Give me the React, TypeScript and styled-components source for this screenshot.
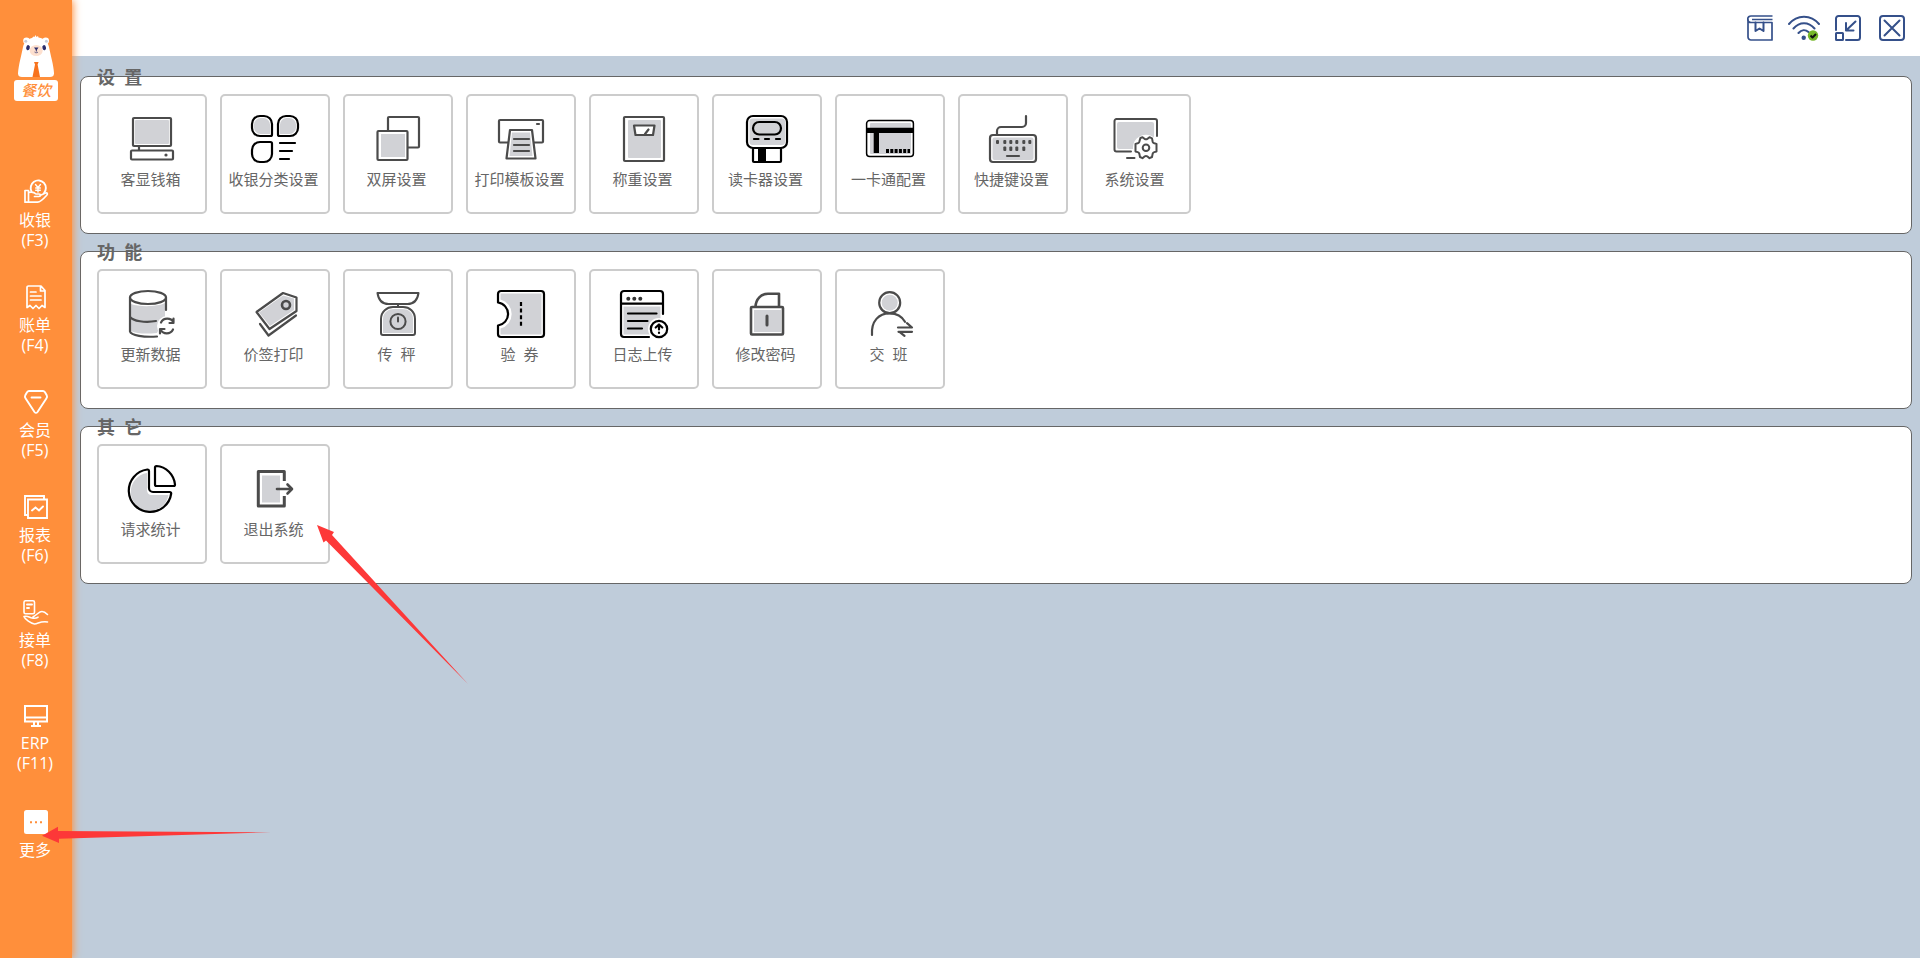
import React from "react";
import styled, { createGlobalStyle } from "styled-components";

const ORANGE = "#ff8f3b";
const GRAY = "#d1d2d6";
const DARK = "#4b4b4b";
const NAVY = "#35508a";

const GlobalStyle = createGlobalStyle`
  * { box-sizing: border-box; }
  body {
    margin: 0;
    background: #bfccda;
    font-family: "Open Sans", "Noto Sans CJK SC", sans-serif;
  }
  svg { display: block; }
`;

const Page = styled.div`
  position: relative;
  display: flex;
  min-height: 100vh;
  overflow: hidden;
`;

const Sidebar = styled.aside`
  flex: none;
  width: 72px;
  background: ${ORANGE};
  box-shadow: 1px 0 8px ${ORANGE};
  z-index: 1;
`;

const Brand = styled.div`
  display: flex;
  flex-direction: column;
  align-items: center;
  gap: 3px;
  padding-top: 35px;
  height: 180px;
`;

const BrandLabel = styled.strong`
  width: 44px;
  height: 21px;
  border-radius: 3px;
  background: #fff;
  color: ${ORANGE};
  font-size: 15px;
  line-height: 21px;
  font-style: italic;
  font-weight: 500;
  text-align: center;
`;

const Nav = styled.nav`
  display: grid;
  grid-auto-rows: 105px;
`;

const NavItem = styled.a`
  display: flex;
  flex-direction: column;
  align-items: center;
  gap: 6px;
  color: #fff;
  font-size: 16px;
  line-height: 20px;
  text-align: center;
  text-decoration: none;
`;

const NavLabel = styled.span`
  padding-right: 2px;
  white-space: pre-line;
`;

const Content = styled.div`
  flex: 1;
  min-width: 0;
`;

const TopBar = styled.header`
  display: flex;
  justify-content: flex-end;
  align-items: center;
  gap: 12px;
  height: 56px;
  padding-right: 12px;
  background: #fff;
`;

const ToolButton = styled.button`
  display: flex;
  justify-content: center;
  width: 32px;
  padding: 0;
  border: 0;
  background: none;
  cursor: pointer;
`;

const Groups = styled.main`
  display: flex;
  flex-direction: column;
  gap: 17px;
  padding: 20px 8px;
`;

const Group = styled.section`
  padding: 0 16px 19px;
  border: 1px solid #666;
  border-radius: 8px;
  background: #fff;
`;

const GroupTitle = styled.h2`
  margin: -12px 0 5px;
  color: #666;
  font-size: 18px;
  line-height: 24px;
  font-weight: 700;
  white-space: pre;
`;

const Tiles = styled.div`
  display: flex;
  flex-wrap: wrap;
  gap: 13px;
`;

const Tile = styled.button`
  display: flex;
  flex-direction: column;
  align-items: center;
  gap: 6px;
  width: 110px;
  height: 120px;
  padding: 19px 0 0;
  border: 2px solid #ccc;
  border-radius: 5px;
  background: #fff;
  color: #666;
  font-family: inherit;
  font-size: 15px;
  line-height: 20px;
  cursor: pointer;
`;

const TileLabel = styled.span`
  padding-right: 3px;
  white-space: pre;
`;

const Pointer = styled.svg`
  position: absolute;
  pointer-events: none;
  fill: #fd3838;
  z-index: 2;
`;

const ExitPointer = styled(Pointer)`
  left: 317px;
  top: 525px;
`;

const MorePointer = styled(Pointer)`
  left: 42px;
  top: 826px;
`;

const Ico = ({ color = DARK, w = 2.2, children }: { color?: string; w?: number; children: React.ReactNode }) => (
  <svg width="48" height="48" viewBox="0 0 48 48" fill="none" stroke={color} strokeWidth={w} strokeLinejoin="round" strokeLinecap="round" overflow="visible" aria-hidden="true">
    {children}
  </svg>
);

const Fill = (p: React.SVGProps<SVGRectElement>) => <rect fill={GRAY} stroke="none" {...p} />;

const icons = {
  drawer: (
    <Ico>
      <Fill x="7" y="5" width="34" height="24" rx="1" />
      <rect x="5" y="3" width="38" height="28" rx="1" />
      <path d="M11 32v3" />
      <rect x="3" y="35.5" width="42" height="9" rx="1" />
      <circle cx="38" cy="40" r="1.6" fill={DARK} stroke="none" />
    </Ico>
  ),
  category: (
    <Ico color="#000">
      <path d="M9.500 3a6.500 6.500 0 0 0-6.500 6.500v3A6.500 6.500 0 0 0 9.500 19H19V9.500A6.500 6.500 0 0 0 12.500 3zM38.500 3a6.500 6.500 0 0 1 6.500 6.500v3a6.500 6.500 0 0 1-6.500 6.500H29V9.500A6.500 6.500 0 0 1 35.500 3z" fill={GRAY} stroke="none" />
      <path d="M9 1h4a8 8 0 0 1 8 8v10.500a1.500 1.500 0 0 1-1.500 1.500H9a8 8 0 0 1-8-8V9a8 8 0 0 1 8-8z" />
      <path d="M39 1h-4a8 8 0 0 0-8 8v10.500a1.500 1.500 0 0 0 1.500 1.500H39a8 8 0 0 0 8-8V9a8 8 0 0 0-8-8z" />
      <path d="M9 47h4a8 8 0 0 0 8-8V28.500a1.500 1.500 0 0 0-1.500-1.500H9a8 8 0 0 0-8 8v4a8 8 0 0 0 8 8z" />
      <path d="M29 28h15M29 36h12M29 44h9" />
    </Ico>
  ),
  screens: (
    <Ico>
      <rect x="14" y="2" width="31" height="30.500" rx="1" />
      <rect x="3.500" y="16" width="30" height="29" rx="1" fill="#fff" />
      <Fill x="7" y="19" width="24" height="23" />
    </Ico>
  ),
  printer: (
    <Ico>
      <rect x="2" y="5" width="44" height="22.500" rx="1" />
      <path d="M40 9h2" />
      <path d="M13 15h22l3.500 28.500H9.500z" fill="#fff" />
      <path d="M15 17.500h18l2.500 23.500h-23z" fill={GRAY} stroke="none" />
      <path d="M17 24h15M17 30h15M17 36h15" />
    </Ico>
  ),
  weigh: (
    <Ico>
      <Fill x="8" y="5" width="33" height="38" rx="1" />
      <rect x="4" y="2" width="40" height="44" rx="1" />
      <path d="M14 10.500h20.500l-1.500 9.500H15.500z" fill="#fff" />
      <path d="M28.500 14.500l-3.500 4.500" />
    </Ico>
  ),
  reader: (
    <Ico color="#000">
      <Fill x="6.500" y="3.500" width="35.500" height="26.500" rx="3" />
      <rect x="4" y="1" width="40" height="32" rx="6" />
      <rect x="10" y="7" width="28" height="12.500" rx="6.200" />
      <path d="M9 24h4.500M20 24h4M31 24h4" transform="translate(2)" />
      <path d="M10 34v12a1 1 0 0 0 1 1h26a1 1 0 0 0 1-1V34" />
      <path d="M15 33h8v14h-8z" fill="#000" stroke="none" />
    </Ico>
  ),
  card: (
    <Ico color="#000" w={1.5}>
      <Fill x="4" y="8" width="41" height="31" rx="1" />
      <rect x="0.600" y="5.600" width="46.800" height="36" rx="3" />
      <path d="M0 12.700h48v5.300H13v20H7.700V18H0z" fill="#000" stroke="none" />
      <path d="M20 36h24" strokeWidth="4" strokeDasharray="3 1.300" strokeLinecap="butt" />
    </Ico>
  ),
  keyboard: (
    <Ico>
      <Fill x="3.500" y="22.500" width="41" height="22.500" rx="2" />
      <rect x="1" y="20" width="46" height="27" rx="3" />
      <path d="M8 19v-3a4 4 0 0 1 4-4h21a4 4 0 0 0 4-4V1" />
      <g fill={DARK} stroke="none">
        {[7, 14.300, 20.300, 26.300, 33.300, 39.300].map((x) => <rect key={x} x={x} y="25" width="3" height="4" rx="1" />)}
        {[14.300, 20.300, 26.300, 33.300].map((x) => <rect key={x} x={x} y="31.500" width="3" height="4.500" rx="1" />)}
      </g>
      <path d="M18 41h12" />
    </Ico>
  ),
  system: (
    <Ico w={2}>
      <Fill x="5" y="7" width="37" height="27" rx="2" />
      <path d="M45 21V6a2 2 0 0 0-2-2H4.500a2 2 0 0 0-2 2v28.500a2 2 0 0 0 2 2H19M15 43h7.500" />
      <g transform="translate(34 32.700)">
        <circle r="13" fill="#fff" stroke="none" />
        <path d="M-5.600-9.700L-3.500-10.500l2.300 1.900a3 3 0 0 0 2.400 0L3.500-10.500 6-9.300l.7 3.400a2.500 2.500 0 0 0 1.600 1.500l2.200.6v7.600l-2.200.6a2.500 2.500 0 0 0-1.600 1.500L6 9.300l-2.500 1.200-2.300-1.900a3 3 0 0 0-2.400 0l-2.300 1.900L-6 9.300l-.7-3.400a2.500 2.500 0 0 0-1.600-1.500l-2.200-.6v-7.600l2.200-.6a2.500 2.500 0 0 0 1.600-1.500z" fill="#fff" />
        <circle r="3.300" />
      </g>
    </Ico>
  ),
  data: (
    <Ico>
      <path d="M3 14c8 3 26 3 34-1v14l-8 16c-10 1-20 1-26-2z" fill={GRAY} stroke="none" />
      <ellipse cx="20" cy="7.500" rx="18" ry="6.500" fill="#fff" />
      <path d="M2 7.500v34c1 4 14 6 27 5M38 7.500V20M2 27c3 4 15 6 26 4" />
      <circle cx="39" cy="36" r="10" fill="#fff" stroke="none" />
      <path d="M33 32.500a7 7 0 0 1 12.500 0M45.500 28.500v4.500h-4M45 39.500a7 7 0 0 1-12.500 0M32 43.500V39h4.500" />
    </Ico>
  ),
  tag: (
    <Ico>
      <path d="M8 22.500L32 5.500l11 3v11.500L19 36z" fill={GRAY} stroke="none" />
      <path d="M5.500 22L32 3l13.500 4.500v13.500L18.500 39z" />
      <circle cx="35" cy="15" r="4" strokeWidth="2.600" />
      <path d="M9 34l8.500 11.500 27.500-20" />
    </Ico>
  ),
  scale: (
    <Ico w={2}>
      <path d="M9 43V29c0-7 6-10 11-10h8c6 0 11 3 11 10v14z" fill={GRAY} stroke="none" />
      <path d="M3.500 3h41c-1 7-5 11-11 11H14.500C8.500 14 4.500 10 3.500 3zM24 14v3M7 43V29c0-7.500 6-12 12-12h10c6.500 0 12 4.500 12 12v14a2 2 0 0 1-2 2H9a2 2 0 0 1-2-2z" />
      <circle cx="24" cy="31.500" r="7.600" />
      <path d="M24 27.500v4" />
    </Ico>
  ),
  ticket: (
    <Ico color="#000">
      <path d="M3.500 3.500h41v41h-41v-6a15 15 0 0 0 0-29z" fill={GRAY} stroke="none" />
      <path d="M1 12.500V4a3 3 0 0 1 3-3h40a3 3 0 0 1 3 3v40a3 3 0 0 1-3 3H4a3 3 0 0 1-3-3v-8.500a11.600 11.600 0 0 0 0-23z" />
      <path d="M24 12v25" strokeDasharray="4 2.600" strokeLinecap="butt" />
    </Ico>
  ),
  log: (
    <Ico color="#000">
      <Fill x="3.500" y="16.500" width="37" height="28" />
      <path d="M43 24V4a3 3 0 0 0-3-3H4a3 3 0 0 0-3 3v40a3 3 0 0 0 3 3h25M1 13.700h42" />
      <g fill="#333" stroke="none">
        <circle cx="8.300" cy="8.700" r="2" /><circle cx="14.300" cy="8.700" r="2" /><circle cx="20.300" cy="8.700" r="2" />
      </g>
      <path d="M8 23.500h28.500M8 31h19.500M8 38.500h14" />
      <circle cx="39" cy="39" r="11" fill="#fff" stroke="none" />
      <circle cx="39" cy="39" r="8.200" />
      <path d="M39 35v4.500M39 42.500v.5M35.700 37.500l3.300-3 3.300 3" />
    </Ico>
  ),
  lock: (
    <Ico w={2.600}>
      <rect x="8" y="17" width="32" height="27.500" rx="1" />
      <Fill x="11" y="20" width="27" height="22" />
      <path d="M12.500 16.500C13 9 18 3.800 25 3.800h11v12.700" />
      <path d="M24 26v9" strokeWidth="3" />
    </Ico>
  ),
  shift: (
    <Ico>
      <circle cx="23.700" cy="12.700" r="8" fill={GRAY} stroke="none" />
      <circle cx="23.700" cy="12.700" r="10.500" />
      <path d="M6 45C5 31 13 23.300 23.500 23.300c7 0 12.500 3 15.500 8.500" />
      <path d="M32 37.500h14l-5-4.300M46 41.800H32.500M33.500 41.800l5 4" />
    </Ico>
  ),
  pie: (
    <Ico color="#000">
      <path d="M19 8a19 19 0 1 0 21.500 22H24c-3 0-5-2-5-5z" fill={GRAY} stroke="none" />
      <path d="M21 6a1.500 1.500 0 0 0-1.700-1.500A21.300 21.300 0 1 0 43.200 28.500a1.500 1.500 0 0 0-1.500-1.500H25a4 4 0 0 1-4-4zM27 2.500A1.500 1.500 0 0 1 28.500 1C38 1.500 46 9.500 47 19.500a1.500 1.500 0 0 1-1.500 1.500H28.500a1.500 1.500 0 0 1-1.500-1.500z" />
    </Ico>
  ),
  exit: (
    <Ico w={3}>
      <Fill x="11" y="10.500" width="18" height="27" />
      <path d="M33.300 16v-9.500H7.300v34.500h26v-10" strokeLinecap="butt" />
      <path d="M26 24h14" strokeWidth="2.600" />
      <path d="M36.500 19.500l4.500 4.500-4.500 4.500" strokeWidth="2.600" />
    </Ico>
  ),
};

const Nic = ({ h = 24, children }: { h?: number; children: React.ReactNode }) => (
  <svg width="24" height={h} viewBox={`0 0 24 ${h}`} fill="none" stroke="#fff" strokeWidth="1.900" strokeLinejoin="round" strokeLinecap="round" overflow="visible" aria-hidden="true">
    {children}
  </svg>
);

const navItems = [
  { label: "收银\n(F3)", icon: (
    <Nic>
      <path d="M7.500 11.500A7.600 7.600 0 1 1 20 13" />
      <path d="M11.500 4.500l2.500 3 2.500-3M14 7.500V12M11.700 8h4.600M11.700 10.200h4.600" strokeWidth="1.400" />
      <path d="M1 10.500h3.500v11.700H1zM4.500 12.500c4-1 6 0 7.500 1.500h3c2 0 2 2.500 0 2.500h-4.500M16 15.500l5.500-2.500c2-.5 2.500 1 1 2.500-4 4.500-6 6.500-9 6.700h-9" strokeWidth="1.700" />
    </Nic>
  ) },
  { label: "账单\n(F4)", icon: (
    <Nic>
      <path d="M3 22.500V2.500A1.500 1.500 0 0 1 4.500 1H17l4 4.500v17l-3-2-3 3-3-3-3 3-3-3zM16.500 1.500V6H21M6.500 7H12M6.500 11h10.500M6.500 15h10.500" strokeWidth="1.700" />
    </Nic>
  ) },
  { label: "会员\n(F5)", icon: (
    <Nic>
      <path d="M5 1h14c1 0 1.500.5 2 1.200l1.700 3c.6 1.200.5 2-.2 3L13.500 22c-1 1.200-2 1.200-3 0L1.500 8.200c-.7-1-.8-1.800-.2-3L3 2.200C3.500 1.500 4 1 5 1zM7.500 7.500h9" />
    </Nic>
  ) },
  { label: "报表\n(F6)", icon: (
    <Nic>
      <path d="M4 20H1V1h19v3M4 4.500h19V23H4zM8 15.500l3.500-3 3.500 3 4-4" strokeLinejoin="miter" />
    </Nic>
  ) },
  { label: "接单\n(F8)", icon: (
    <Nic>
      <rect x="0" y="0.800" width="10.500" height="13" rx="1.500" strokeWidth="1.600" />
      <path d="M3 4.500h5M3 8h2" />
      <path d="M0 16.500c4-1 6 1.500 8 1.500 1.500 0 3 1 6-.8M9 17c5-3 6-5.500 9-5.500 2 0 4 1.500 5.500 3M0 16.500c1 3 7 7 10.500 7.500 4-.500 6-3 13-2" strokeWidth="1.600" />
    </Nic>
  ) },
  { label: "ERP\n(F11)", icon: (
    <Nic h={22}>
      <path d="M1 1h22v15.500H1zM1 12.500h22M10 17v4M14 17v4M7 21h10" strokeLinejoin="miter" strokeLinecap="butt" strokeWidth="2" />
    </Nic>
  ) },
  { label: "更多", icon: (
    <Nic>
      <rect width="24" height="24" rx="2.500" fill="#fff" stroke="none" />
      <path d="M6 11.200h2v2H6zM11 11.200h2v2h-2zM16 11.200h2v2h-2z" fill={ORANGE} stroke="none" />
    </Nic>
  ) },
];

const groups = [
  { title: "设  置", tiles: [
    ["客显钱箱", icons.drawer], ["收银分类设置", icons.category], ["双屏设置", icons.screens],
    ["打印模板设置", icons.printer], ["称重设置", icons.weigh], ["读卡器设置", icons.reader],
    ["一卡通配置", icons.card], ["快捷键设置", icons.keyboard], ["系统设置", icons.system],
  ] },
  { title: "功  能", tiles: [
    ["更新数据", icons.data], ["价签打印", icons.tag], ["传  秤", icons.scale], ["验  券", icons.ticket],
    ["日志上传", icons.log], ["修改密码", icons.lock], ["交  班", icons.shift],
  ] },
  { title: "其  它", tiles: [["请求统计", icons.pie], ["退出系统", icons.exit]] },
] as { title: string; tiles: [string, React.ReactNode][] }[];

const Tool = ({ w = 26, children }: { w?: number; children: React.ReactNode }) => (
  <svg width={w} height="26" viewBox={`0 0 ${w} 26`} fill="none" stroke={NAVY} strokeWidth="2" strokeLinejoin="round" strokeLinecap="round" aria-hidden="true">
    {children}
  </svg>
);

const tools = [
  { name: "手册", icon: (
    <Tool>
      <path d="M25.500 1H4a3 3 0 0 0 0 6.500h21V25H4a3 3 0 0 1-3-3V4M5 4.500h20.500" strokeLinecap="butt" strokeWidth="1.700" />
      <path d="M8.500 7.500v8.500l4-2.500 4 2.500V7.500" />
    </Tool>
  ) },
  { name: "网络", icon: (
    <Tool w={32}>
      <path d="M1 9C9-.8 23-.8 31 9M5.500 13.500c6-7 15-7 21 0M10.500 18c3-3.500 7-3.500 10-1" />
      <circle cx="15.700" cy="22.800" r="2.200" fill={NAVY} stroke="none" />
      <circle cx="25" cy="20.500" r="5.200" fill="#76b72b" stroke="none" />
      <path d="M22.500 20.500l2 2 3.500-3.500" stroke="#111" strokeWidth="2" strokeLinecap="butt" />
    </Tool>
  ) },
  { name: "最小化", icon: (
    <Tool>
      <path d="M1 15V3.500A2.500 2.500 0 0 1 3.500 1h19A2.500 2.500 0 0 1 25 3.500v19a2.500 2.500 0 0 1-2.500 2.500H11M20.500 6.500l-9.500 9M11 8v7.500h7.500" />
      <rect x="1" y="18" width="7" height="7" rx="0.500" />
    </Tool>
  ) },
  { name: "关闭", icon: (
    <Tool>
      <rect x="1" y="1" width="24" height="24" rx="3" />
      <path d="M5.500 5.500l15 15M20.500 5.500l-15 15" />
    </Tool>
  ) },
];

const Bear = () => (
  <svg width="36" height="42" viewBox="0 0 36 42" aria-hidden="true">
    <g fill="#fff">
      <circle cx="8.500" cy="5.800" r="3.300" /><circle cx="27.700" cy="5.800" r="3.300" />
      <path d="M14 3l1.500-1.500L16.500 2l1-2 1 2L20 1l.5 1.500C27 3.500 30 7 31 12c1.500 8 4.500 18 5 26 .1 3-1.500 4-4 4H4c-2.500 0-4.100-1-4-4C.5 30 3.500 20 5 12c1-5 4-8 9-9z" />
    </g>
    <circle cx="7.800" cy="6.200" r="1.500" fill="#c9cdd8" /><circle cx="28.400" cy="6.200" r="1.500" fill="#c9cdd8" />
    <ellipse cx="18.200" cy="15.500" rx="6.500" ry="5.500" fill="#fde0cf" />
    <ellipse cx="10" cy="12.700" rx="1.800" ry="2.600" fill="#2b2d6b" transform="rotate(15 10 12.700)" />
    <ellipse cx="26.200" cy="12.700" rx="1.800" ry="2.600" fill="#2b2d6b" transform="rotate(-15 26.200 12.700)" />
    <path d="M16 12.500h4.500l-1.700 2.500v1.500h-1V15z" fill="#2b2d6b" />
    <path d="M16.500 17c1 1 2.500 1 3.500 0" stroke="#2b2d6b" strokeWidth="0.700" fill="none" />
    <path d="M16 27h4.600l-1 2.500L22 42h-7.500L17 29.500z" fill="#f8731d" />
  </svg>
);

export default function App() {
  return (
    <Page>
      <GlobalStyle />
      <Sidebar>
        <Brand>
          <Bear />
          <BrandLabel>餐饮</BrandLabel>
        </Brand>
        <Nav>
          {navItems.map((item) => (
            <NavItem key={item.label} href="#">
              {item.icon}
              <NavLabel>{item.label}</NavLabel>
            </NavItem>
          ))}
        </Nav>
      </Sidebar>
      <Content>
        <TopBar>
          {tools.map((t) => (
            <ToolButton key={t.name} type="button" aria-label={t.name}>{t.icon}</ToolButton>
          ))}
        </TopBar>
        <Groups>
          {groups.map((g) => (
            <Group key={g.title}>
              <GroupTitle>{g.title}</GroupTitle>
              <Tiles>
                {g.tiles.map(([label, icon]) => (
                  <Tile key={label} type="button">
                    {icon}
                    <TileLabel>{label}</TileLabel>
                  </Tile>
                ))}
              </Tiles>
            </Group>
          ))}
        </Groups>
      </Content>
      <ExitPointer width="152" height="160" viewBox="0 0 152 160" aria-hidden="true">
        <path d="M0 0l17 7-2 3L151 159 9 15.500 6.500 17.500z" />
      </ExitPointer>
      <MorePointer width="230" height="18" viewBox="0 0 230 18" aria-hidden="true">
        <path d="M0 9.700L16 .7v4.300L229 6.300 17 12.700V17z" />
      </MorePointer>
    </Page>
  );
}
